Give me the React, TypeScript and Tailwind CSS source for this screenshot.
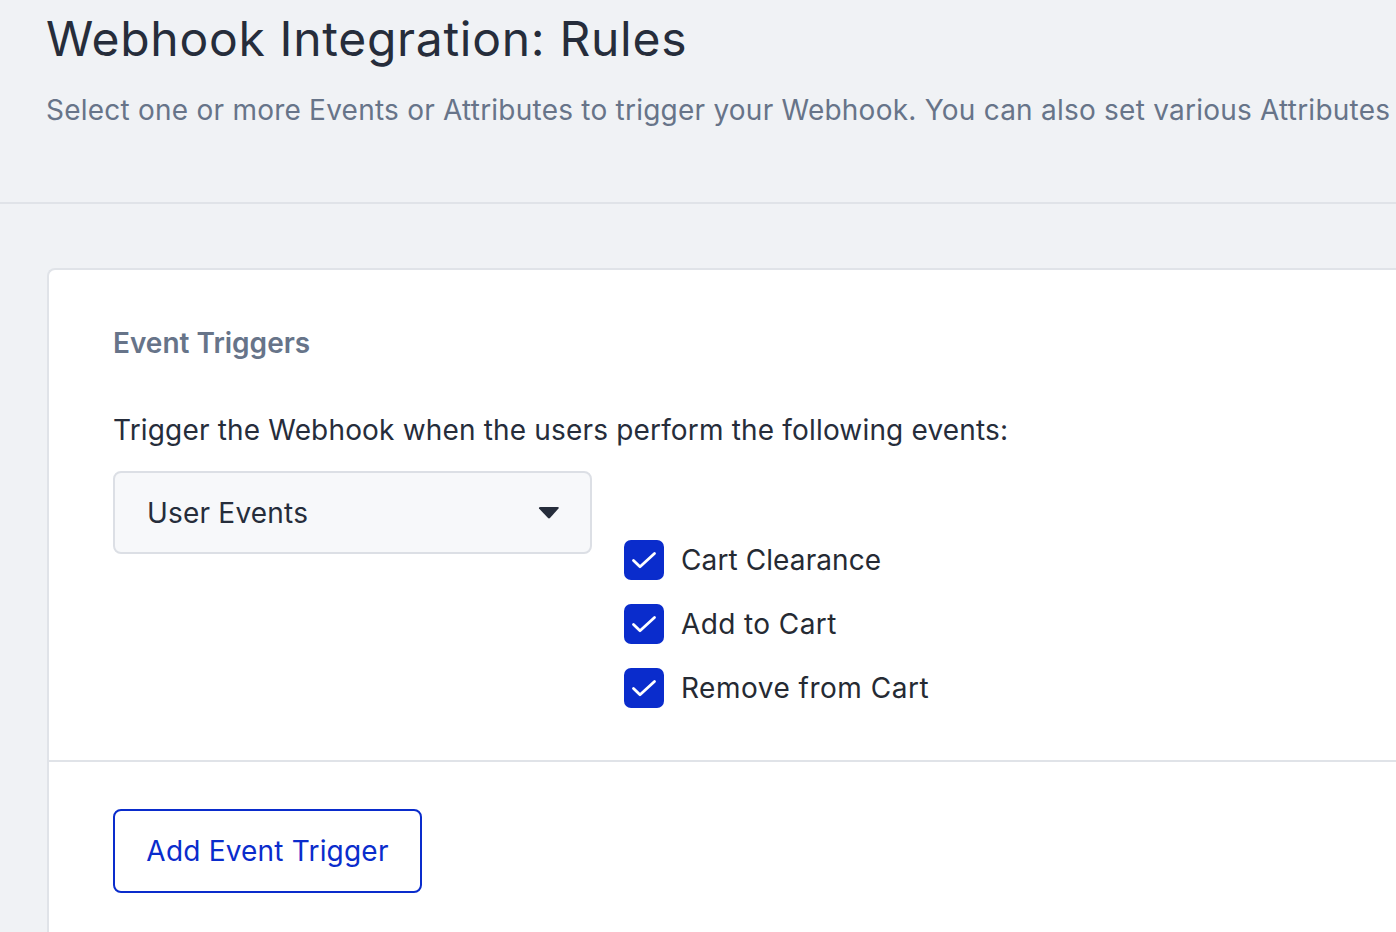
import React from "react";

function Check({ label, track }: { label: string; track: string }) {
  return (
    <div className="flex items-center h-[40px] gap-[17px]">
      <span className="w-[40px] h-[40px] rounded-[7px] bg-[#0a2ccc] flex items-center justify-center shrink-0">
        <svg width="28" height="28" viewBox="0 0 28 28" fill="none">
          <path d="M3.5 14.5l6.5 6.2L24.5 7.5" stroke="white" strokeWidth="2.8" strokeLinecap="round" strokeLinejoin="round" />
        </svg>
      </span>
      <span className={"text-[28px] text-[#252a33] leading-none " + track}>{label}</span>
    </div>
  );
}

export default function App() {
  return (
    <div className="w-[1396px] h-[932px] overflow-hidden bg-[#f0f2f5]" style={{ fontFamily: "Inter, 'Noto Sans', sans-serif" }}>
      <div className="h-[204px] border-b-2 border-[#e0e3e8] pl-[46px] pt-[10px] whitespace-nowrap">
        <h1 className="text-[48px] leading-[58px] text-[#262d3b] font-normal tracking-[0.7px]">Webhook Integration: Rules</h1>
        <p className="mt-[24px] text-[28px] leading-[36px] text-[#677489] tracking-[0.23px]">
          Select one or more Events or Attributes to trigger your Webhook. You can also set various Attributes
        </p>
      </div>
      <div className="ml-[47px] mt-[64px] bg-white border-2 border-r-0 border-[#e0e3e8] rounded-tl-[8px] h-[700px]">
        <div className="pl-[64px] pt-[57px] pb-[52px] border-b-2 border-[#e0e3e8]">
          <h2 className="text-[28px] leading-[32px] font-semibold text-[#677489]">Event Triggers</h2>
          <p className="mt-[53px] text-[28px] leading-[36px] text-[#262d3b] tracking-[0.17px]">
            Trigger the Webhook when the users perform the following events:
          </p>
          <div className="mt-[23px] flex">
            <div className="w-[479px] h-[83px] bg-[#f7f8fa] border-2 border-[#dcdfe5] rounded-[8px] flex items-center justify-between pl-[32px] pr-[30px] shrink-0">
              <span className="text-[28px] text-[#262d3b] tracking-[0.2px]">User Events</span>
              <svg width="22" height="14" viewBox="0 0 22 14">
                <path d="M1 2.5 Q0.5 1 2.5 1 H19.5 Q21.5 1 20.5 2.5 L12.2 11.8 Q11 13 9.8 11.8 Z" fill="#262d3b" />
              </svg>
            </div>
            <div className="ml-[32px] mt-[69px] flex flex-col gap-[24px]">
              <Check label="Cart Clearance" track="tracking-[0.1px]" />
              <Check label="Add to Cart" track="tracking-[0.4px]" />
              <Check label="Remove from Cart" track="tracking-[0.5px]" />
            </div>
          </div>
        </div>
        <div className="pl-[64px] pt-[47px]">
          <button className="w-[309px] h-[84px] border-2 border-[#0a2ccc] rounded-[8px] text-[28px] text-[#0a2ccc] bg-white tracking-[0.2px]">
            Add Event Trigger
          </button>
        </div>
      </div>
    </div>
  );
}
